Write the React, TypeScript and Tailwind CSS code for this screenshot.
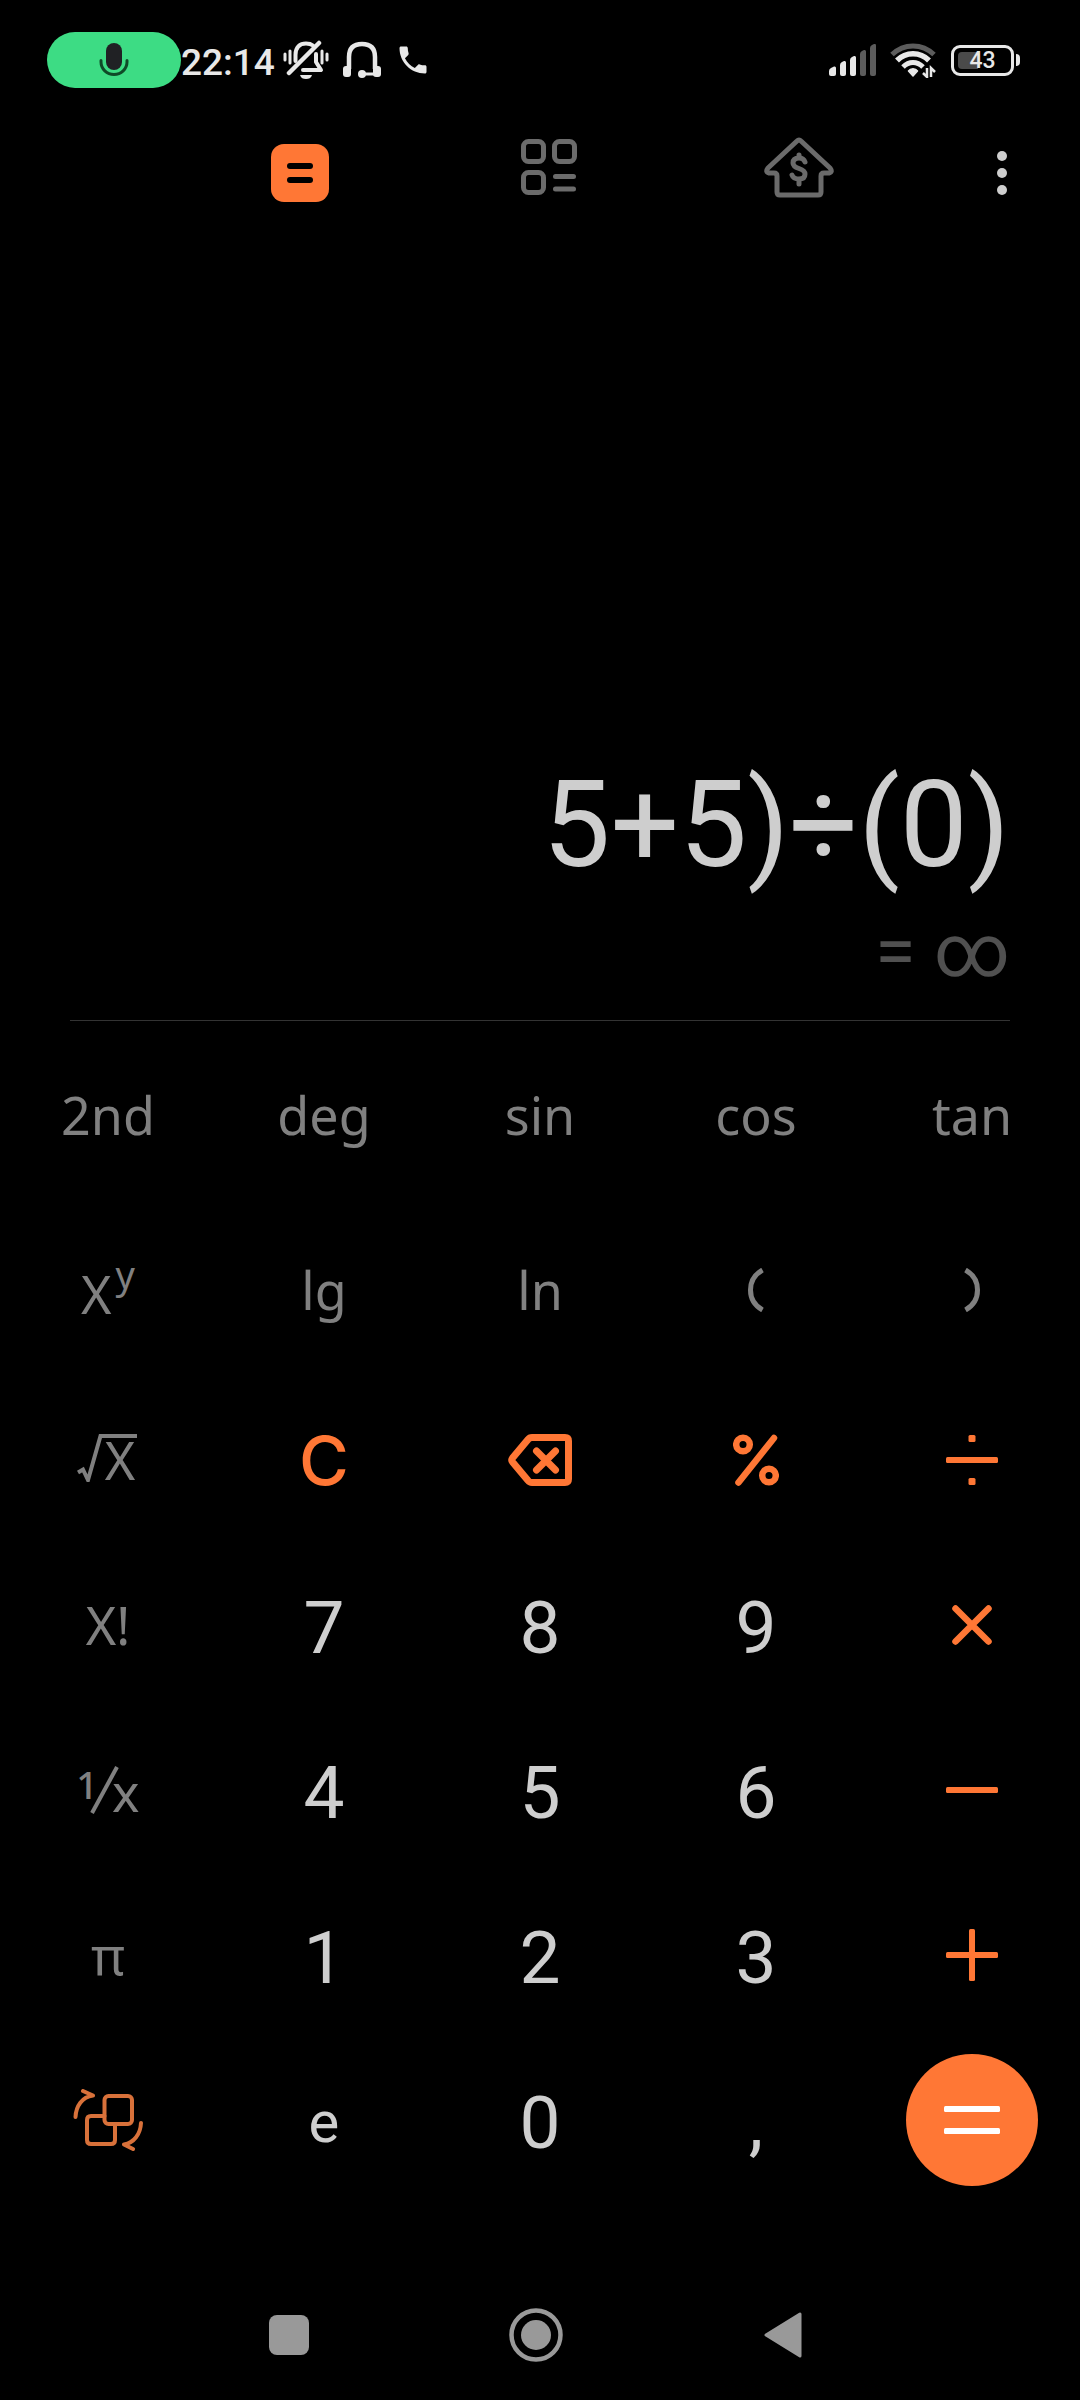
import type { ReactNode } from "react";

const label = "font-['Noto_Sans',sans-serif] text-[52px] leading-none text-[#808080]";
const digit = "pt-2 font-[Roboto,sans-serif] text-[73px] leading-none text-[#cecece]";
const orange = "text-[#ff7735]";

function Key({ name, className = "", children }: { name: string; className?: string; children: ReactNode }) {
  return (
    <button type="button" aria-label={name} className={`flex items-center justify-center ${className}`}>
      {children}
    </button>
  );
}

function StatusBar() {
  return (
    <header className="flex h-30 items-center pr-[60px] pl-[47px] text-[#e8e8e8]">
      <div className="flex h-14 w-[134px] items-center justify-center rounded-full bg-[#3ddc84]">
        <svg width="30" height="36" viewBox="0 0 30 36" fill="none" aria-hidden="true">
          <rect x="7" y="1" width="16" height="27" rx="8" fill="#202124" />
          <path d="M2 18.500v1.500a13 12.500 0 0 0 26 0v-1.500" stroke="#0f4a28" strokeWidth="3" strokeLinecap="round" />
        </svg>
      </div>
      <time className="pt-1 font-[Roboto,sans-serif] text-[37px] leading-none font-medium">22:14</time>
      <svg className="ml-2" width="46" height="40" viewBox="0 0 46 40" fill="none" stroke="currentColor" strokeLinecap="round" aria-hidden="true">
        <path d="M2 14v6M7 11v12M39 11v12M44 14v6" strokeWidth="3" />
        <path d="M12.500 21V15C12.500 7 17 3.500 23 3.500c3 0 5 .5 7 2" strokeWidth="4" />
        <path d="M6 33 36 3" strokeWidth="4.500" />
        <path d="M33 14v8l5 8H20" strokeWidth="4" strokeLinejoin="round" />
        <path d="M17 35h12c-1 3-3 4-6 4s-5-1-6-4z" fill="currentColor" stroke="none" />
      </svg>
      <svg className="ml-3.5" width="38" height="38" viewBox="0 0 38 38" fill="none" stroke="currentColor" aria-hidden="true">
        <path d="M6 28V16C6 7 11 3 19 3s13 4 13 13v12" strokeWidth="4.500" />
        <rect x="0" y="25" width="8" height="11" rx="3" fill="currentColor" stroke="none" />
        <rect x="30" y="25" width="8" height="11" rx="3" fill="currentColor" stroke="none" />
        <circle cx="19" cy="33" r="4" fill="currentColor" stroke="none" />
        <path d="M19 33h14" strokeWidth="3" />
      </svg>
      <svg className="ml-3.5" width="36" height="36" viewBox="0 0 24 24" fill="currentColor" aria-hidden="true">
        <path d="M6.620 10.790c1.440 2.830 3.760 5.140 6.590 6.590l2.200-2.200c.27-.27.67-.36 1.020-.24 1.120.37 2.330.57 3.570.57.55 0 1 .45 1 1V20c0 .55-.45 1-1 1-9.390 0-17-7.610-17-17 0-.55.45-1 1-1h3.500c.55 0 1 .45 1 1 0 1.250.2 2.450.57 3.570.11.350.03.740-.25 1.020l-2.200 2.200z" />
      </svg>
      <svg className="ml-auto" width="48" height="32" viewBox="0 0 48 32" fill="currentColor" aria-hidden="true">
        <path d="M0 27q0-2 2-3l3-1.500q2-.5 2 1.500v6q0 2-2 2H2q-2 0-2-2z" />
        <path d="M11 21q0-2 2-3l2-1q2-.5 2 1.500V30q0 2-2 2h-2q-2 0-2-2z" />
        <path d="M21 16q0-2 2-3l2-1q2-.5 2 1.500V30q0 2-2 2h-2q-2 0-2-2z" />
        <path d="M31 10q0-2 2-3l2-1q2-.5 2 1.500V30q0 2-2 2h-2q-2 0-2-2z" fill="#5c5c5c" />
        <path d="M41 4q0-2 2-3l2-1q2-.5 2 1.500V30q0 2-2 2h-2q-2 0-2-2z" fill="#5c5c5c" />
      </svg>
      <svg className="ml-[13px]" width="48" height="36" viewBox="0 0 48 36" fill="none" stroke="currentColor" aria-hidden="true">
        <path d="M2 12.500C14 1 32 1 44 12.500" stroke="#5c5c5c" strokeWidth="5" />
        <path d="M7 18.500c9-9 23-9 32 0" strokeWidth="5.500" />
        <path d="M13 25c6-6 14-6 20 0" strokeWidth="5" />
        <path d="M18.500 29c2-3 7-3 9 0l-4.500 5z" fill="currentColor" strokeWidth="1.500" strokeLinejoin="round" />
        <path d="M37 26v9l-4-4M41 35v-9l4 4" strokeWidth="2.500" />
      </svg>
      <div className="relative ml-[13px] flex h-[31px] w-[63px] items-center justify-center rounded-[9px] border-3 border-[#e8e8e8]">
        <div className="absolute inset-y-1 left-1 w-5 rounded-l-sm bg-[#4a4a4a]" />
        <span className="relative font-[Roboto,sans-serif] text-[23px] leading-none font-medium">43</span>
      </div>
      <div className="ml-0.5 h-3 w-1 rounded-r-sm bg-[#e8e8e8]" />
    </header>
  );
}

function Toolbar() {
  return (
    <nav className="grid h-[106px] grid-cols-[175fr_249fr_250fr_250fr_156fr] text-[#6b6b6b]">
      <Key name="Calculator" className="col-start-2">
        <svg width="58" height="58" viewBox="0 0 58 58" aria-hidden="true">
          <rect width="58" height="58" rx="13" fill="#ff7735" />
          <rect x="16" y="19" width="26" height="6" rx="3" />
          <rect x="16" y="33" width="26" height="6" rx="3" />
        </svg>
      </Key>
      <Key name="Converters">
        <svg width="56" height="68" viewBox="0 0 56 68" fill="none" stroke="currentColor" strokeWidth="5" aria-hidden="true">
          <rect x="2.500" y="2.500" width="20" height="20" rx="5" />
          <rect x="33.500" y="2.500" width="20" height="20" rx="5" />
          <rect x="2.500" y="33.500" width="20" height="20" rx="5" />
          <path d="M34.500 37.500h18M34.500 50h18" strokeLinecap="round" />
        </svg>
      </Key>
      <Key name="Mortgage">
        <svg width="70" height="72" viewBox="0 0 70 72" fill="none" stroke="currentColor" strokeWidth="5" strokeLinejoin="round" strokeLinecap="round" aria-hidden="true">
          <path d="M33 4q2-2 4 0l29 27q3 4-1 5h-5q-3 0-3 3v16q0 3-3 3H16q-3 0-3-3V39q0-3-3-3H5q-4-1-1-5z" />
          <path d="M41 25c-1-3-3-4-6-4-4 0-6 2-6 5 0 7 12 4 12 11 0 3-2 5-6 5-4 0-6-1-7-4M35 18v3M35 42v5" />
        </svg>
      </Key>
      <Key name="More options">
        <svg width="10" height="44" viewBox="0 0 10 44" fill="#cecece" aria-hidden="true">
          <circle cx="5" cy="5" r="5" />
          <circle cx="5" cy="22" r="5" />
          <circle cx="5" cy="39" r="5" />
        </svg>
      </Key>
    </nav>
  );
}

function Keypad() {
  return (
    <section aria-label="Keypad" className="mt-[6px] grid grid-cols-5 grid-rows-[176px_174px_repeat(5,165px)]">
      <Key name="2nd" className={label}>2nd</Key>
      <Key name="deg" className={label}>deg</Key>
      <Key name="sin" className={label}>sin</Key>
      <Key name="cos" className={label}>cos</Key>
      <Key name="tan" className={label}>tan</Key>

      <Key name="x to the power y" className={`gap-1 ${label}`}>
        <span className="pt-2">X</span>
        <span className="pb-8 text-[38px] leading-none">y</span>
      </Key>
      <Key name="lg" className={label}>lg</Key>
      <Key name="ln" className={label}>ln</Key>
      <Key name="Open parenthesis" className="text-[#808080]">
        <svg width="16" height="44" viewBox="0 0 16 44" fill="none" stroke="currentColor" strokeWidth="5" aria-hidden="true">
          <path d="M14.500 2C-1.500 11-1.500 33 14.500 42" />
        </svg>
      </Key>
      <Key name="Close parenthesis" className="text-[#808080]">
        <svg width="16" height="44" viewBox="0 0 16 44" fill="none" stroke="currentColor" strokeWidth="5" aria-hidden="true">
          <path d="M1.500 2C17.500 11 17.500 33 1.500 42" />
        </svg>
      </Key>

      <Key name="Square root" className={label}>
        <span className="relative pl-6">
          <svg className="absolute top-0 -left-1" width="60" height="48" viewBox="0 0 60 48" fill="none" stroke="currentColor" strokeWidth="4" aria-hidden="true">
            <path d="M1 38.500 6 35.500 11 46 23.500 2H60" />
          </svg>
          X
        </span>
      </Key>
      <Key name="Clear" className={`font-[Inter,sans-serif] text-[68px] leading-none font-medium ${orange}`}>C</Key>
      <Key name="Backspace" className={orange}>
        <svg width="64" height="52" viewBox="0 0 64 52" fill="none" stroke="currentColor" strokeWidth="7" strokeLinecap="round" strokeLinejoin="round" aria-hidden="true">
          <path d="M24 3.500H57q3.500 0 3.500 3.500V45q0 3.500-3.500 3.500H24q-2.500 0-4-2L4.500 28q-1.500-2 0-4L20 5.500q1.500-2 4-2z" />
          <path d="M28.500 17 47.500 36M47.500 17 28.500 36" />
        </svg>
      </Key>
      <Key name="Percent" className={orange}>
        <svg width="46" height="52" viewBox="0 0 46 52" fill="none" stroke="currentColor" strokeWidth="6.500" strokeLinecap="round" aria-hidden="true">
          <circle cx="10" cy="10.500" r="6.800" />
          <circle cx="36" cy="41.500" r="6.800" />
          <path d="M41 4 5.500 48.500" />
        </svg>
      </Key>
      <Key name="Divide" className={orange}>
        <svg width="52" height="52" viewBox="0 0 52 52" fill="currentColor" aria-hidden="true">
          <rect y="23" width="52" height="6" rx="1.500" />
          <rect x="22.500" y="1" width="7" height="7" rx="1.500" />
          <rect x="22.500" y="44" width="7" height="7" rx="1.500" />
        </svg>
      </Key>

      <Key name="Factorial" className={label}>X!</Key>
      <Key name="7" className={digit}>7</Key>
      <Key name="8" className={digit}>8</Key>
      <Key name="9" className={digit}>9</Key>
      <Key name="Multiply" className={orange}>
        <svg width="40" height="40" viewBox="0 0 40 40" stroke="currentColor" strokeWidth="6.500" strokeLinecap="round" aria-hidden="true">
          <path d="M3.500 3.500 36.500 36.500M36.500 3.500 3.500 36.500" />
        </svg>
      </Key>

      <Key name="Reciprocal" className={label}>
        <span className="pb-3 text-[38px] leading-none font-medium">1</span>
        <svg className="-mx-2" width="30" height="48" viewBox="0 0 30 48" stroke="currentColor" strokeWidth="4" aria-hidden="true">
          <path d="M2 47 27 1" />
        </svg>
        <span className="pt-1">x</span>
      </Key>
      <Key name="4" className={digit}>4</Key>
      <Key name="5" className={digit}>5</Key>
      <Key name="6" className={digit}>6</Key>
      <Key name="Subtract" className={orange}>
        <svg width="52" height="6" viewBox="0 0 52 6" fill="currentColor" aria-hidden="true">
          <rect width="52" height="6" rx="1.500" />
        </svg>
      </Key>

      <Key name="Pi" className={label}>π</Key>
      <Key name="1" className={digit}>1</Key>
      <Key name="2" className={digit}>2</Key>
      <Key name="3" className={digit}>3</Key>
      <Key name="Add" className={orange}>
        <svg width="52" height="52" viewBox="0 0 52 52" fill="currentColor" aria-hidden="true">
          <rect y="23" width="52" height="6" rx="1.500" />
          <rect x="23" width="6" height="52" rx="1.500" />
        </svg>
      </Key>

      <Key name="Switch layout" className="text-[#d8713a]">
        <svg width="70" height="62" viewBox="0 0 70 62" fill="none" stroke="currentColor" strokeWidth="4" strokeLinecap="round" strokeLinejoin="round" aria-hidden="true">
          <rect x="31.500" y="7" width="27.500" height="28" rx="4" />
          <path d="M31.500 27H18q-4 0-4 4v20q0 4 4 4h20q4 0 4-4V35" />
          <path d="M2.500 28C3 17 9 8 20 6.500L10 2" />
          <path d="M68 34C67.500 45 61 54 51 55.500L60 60" />
        </svg>
      </Key>
      <Key name="e" className="pt-1 font-[Roboto,sans-serif] text-[58px] leading-none text-[#cecece]">e</Key>
      <Key name="0" className={digit}>0</Key>
      <Key name="Decimal comma" className={digit}>,</Key>
      <Key name="Equals">
        <span className="flex size-33 items-center justify-center rounded-full bg-[#ff7735]">
          <svg width="56" height="28" viewBox="0 0 56 28" fill="#fff" aria-hidden="true">
            <rect width="56" height="6" rx="1.500" />
            <rect y="22" width="56" height="6" rx="1.500" />
          </svg>
        </span>
      </Key>
    </section>
  );
}

function NavigationBar() {
  return (
    <nav className="mt-auto grid h-[130px] grid-cols-3 pr-[174px] pl-[166px] text-[#999999]">
      <Key name="Recent apps">
        <span className="size-10 rounded-lg bg-[#999999]" />
      </Key>
      <Key name="Home">
        <svg width="54" height="54" viewBox="0 0 54 54" aria-hidden="true">
          <circle cx="27" cy="27" r="24.500" fill="none" stroke="currentColor" strokeWidth="4.500" />
          <circle cx="27" cy="27" r="15" fill="currentColor" />
        </svg>
      </Key>
      <Key name="Back">
        <svg width="38" height="46" viewBox="0 0 38 46" fill="currentColor" stroke="currentColor" strokeWidth="3" strokeLinejoin="round" aria-hidden="true">
          <path d="M2 23 36 2v42z" />
        </svg>
      </Key>
    </nav>
  );
}

export default function App() {
  return (
    <div className="flex min-h-screen flex-col bg-black">
      <StatusBar />
      <Toolbar />
      <main>
        <section aria-label="Display" className="mx-[70px] flex h-[795px] flex-col items-end justify-end border-b border-[#333333] font-[Roboto,sans-serif]">
          <output className="text-[121px] leading-none text-[#cecece]">5+5)÷(0)</output>
          <output className="mt-7 mb-8 text-[74px] leading-none text-[#505050]">= ∞</output>
        </section>
        <Keypad />
      </main>
      <NavigationBar />
    </div>
  );
}
